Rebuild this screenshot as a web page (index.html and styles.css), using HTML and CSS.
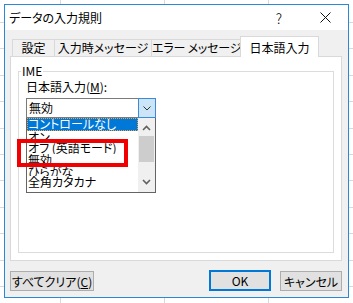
FILE: index.html
```html
<!DOCTYPE html>
<html lang="ja">
<head>
<meta charset="utf-8">
<link rel="stylesheet" href="styles.css">
</head>
<body>
<div class="dialog">
  <div class="titlebar">
    <span class="title">データの入力規則</span>
    <span class="cap help">?</span>
    <span class="cap close"><svg width="11" height="11" viewBox="0 0 11 11"><path d="M0.5 0.5 L10.5 10.5 M10.5 0.5 L0.5 10.5" stroke="#111" stroke-width="1" fill="none"/></svg></span>
  </div>
  <div class="client">
    <div class="tabs">
      <div class="tab t1">設定</div>
      <div class="tab t2">入力時メッセージ</div>
      <div class="tab t3">エラー メッセージ</div>
      <div class="tab t4 active">日本語入力</div>
    </div>
    <div class="panel">
      <div class="group">
        <span class="group-label">IME</span>
        <div class="field-label">日本語入力(<u>M</u>):</div>
        <div class="combo">
          <span class="combo-value">無効</span>
          <span class="combo-btn"><svg width="8" height="5" viewBox="0 0 8 5"><polyline points="0.5,0.5 4,4 7.5,0.5" stroke="#333" stroke-width="1" fill="none"/></svg></span>
          <div class="list">
            <div class="items">
              <div class="item sel">コントロールなし</div>
              <div class="item short">オン</div>
              <div class="item gap">オフ (英語モード)</div>
              <div class="item">無効</div>
              <div class="item tight">ひらがな</div>
              <div class="item">全角カタカナ</div>
            </div>
            <div class="scrollbar">
              <div class="sb-arrow up"><svg width="9" height="6" viewBox="0 0 9 6"><polyline points="1,5 4.5,1.5 8,5" stroke="#606060" stroke-width="1.6" fill="none"/></svg></div>
              <div class="sb-thumb"></div>
              <div class="sb-space"></div>
              <div class="sb-arrow down"><svg width="9" height="6" viewBox="0 0 9 6"><polyline points="1,1 4.5,4.5 8,1" stroke="#606060" stroke-width="1.6" fill="none"/></svg></div>
            </div>
          </div>
        </div>
        <div class="highlight"></div>
      </div>
    </div>
    <div class="buttons">
      <button class="btn clear">すべてクリア(<u>C</u>)</button>
      <span class="spacer"></span>
      <button class="btn ok">OK</button>
      <button class="btn cancel">キャンセル</button>
    </div>
  </div>
</div>
</body>
</html>
```
FILE: styles.css
```css
html, body {
  margin: 0;
  padding: 0;
}
body {
  width: 353px;
  height: 303px;
  overflow: hidden;
  box-sizing: border-box;
  padding: 4px 0 0 4px;
  font-family: "Noto Sans CJK JP", "Noto Sans", sans-serif;
  font-feature-settings: "palt";
  font-size: 12px;
  color: #000;
  background-color: #fff;
  background-image:
    linear-gradient(to right, transparent 60px, #d9d9d9 60px, #d9d9d9 61px, transparent 61px, transparent 164px, #d9d9d9 164px, #d9d9d9 165px, transparent 165px, transparent 268px, #d9d9d9 268px, #d9d9d9 269px, transparent 269px),
    repeating-linear-gradient(to bottom, transparent 0, transparent 22px, #d9d9d9 22px, #d9d9d9 23px, transparent 23px, transparent 26.4px);
}
.dialog {
  width: 345px;
  height: 294px;
  box-sizing: border-box;
  border: 1px solid #2a88d6;
  display: flex;
  flex-direction: column;
  background: #f0f0f0;
}
.titlebar {
  height: 25px;
  flex: none;
  background: #fff;
  display: flex;
  align-items: center;
}
.title {
  flex: 1;
  padding-left: 4px;
  line-height: 25px;
  white-space: nowrap;
}
.cap {
  width: 46px;
  height: 25px;
  display: flex;
  align-items: center;
  justify-content: center;
}
.help {
  font-size: 14px;
  font-weight: 300;
  padding-top: 1px;
  box-sizing: border-box;
}
.client {
  flex: 1;
  padding: 6px 6px 6px 5px;
  display: flex;
  flex-direction: column;
}
.tabs {
  height: 21px;
  display: flex;
  align-items: flex-end;
  margin-left: 2px;
}
.tab {
  box-sizing: border-box;
  height: 18px;
  border: 1px solid #d9d9d9;
  border-bottom: none;
  background: #f0f0f0;
  margin-left: -1px;
  text-align: center;
  line-height: 16px;
  white-space: nowrap;
}
.t1 { width: 43px; margin-left: 0; }
.t2 { width: 98px; }
.t3 { width: 90px; letter-spacing: -0.2px; }
.t4 { width: 79px; }
.tab.active {
  height: 21px;
  background: #fff;
  padding-top: 3px;
  position: relative;
  z-index: 1;
}
.panel {
  margin-top: -1px;
  width: 332px;
  height: 205px;
  box-sizing: border-box;
  border: 1px solid #d9d9d9;
  background: #fff;
  padding: 14px 7px 0 7px;
}
.group {
  position: relative;
  width: 316px;
  height: 182px;
  box-sizing: border-box;
  border: 1px solid #dcdcdc;
  padding: 0 0 0 7px;
}
.group-label {
  position: absolute;
  left: 2px;
  top: -8px;
  padding: 0 1px;
  line-height: 14px;
  background: #fff;
}
.field-label {
  margin-top: 8px;
  line-height: 14px;
  white-space: nowrap;
}
.field-label u, .btn u {
  text-underline-offset: 1px;
}
.combo {
  position: relative;
  margin-top: 4px;
  width: 130px;
  height: 20px;
  box-sizing: border-box;
  border: 1px solid #7a7a7a;
  display: flex;
  background: #fff;
}
.combo-value {
  flex: 1;
  padding-left: 2px;
  line-height: 18px;
}
.combo-btn {
  width: 18px;
  box-sizing: border-box;
  margin: -1px -1px -1px 0;
  border: 1px solid #3c8bd9;
  background: #cce4f7;
  display: flex;
  align-items: center;
  justify-content: center;
}
.list {
  position: absolute;
  left: -1px;
  top: 19px;
  width: 130px;
  height: 75px;
  box-sizing: border-box;
  border: 1px solid #646464;
  border-top: none;
  background: #fff;
  display: flex;
}
.items {
  flex: 1;
  min-width: 0;
}
.item {
  height: 12px;
  line-height: 12px;
  overflow: hidden;
  padding-left: 1px;
  white-space: nowrap;
}
.item.sel {
  height: 13px;
  background: #0078d7;
  color: #fff;
  outline: 1px dotted #f5a33a;
  outline-offset: -1px;
}
.item.short { height: 8px; }
.item.gap { margin-top: 3px; }
.item.tight { height: 10px; }
.scrollbar {
  width: 17px;
  background: #f0f0f0;
  display: flex;
  flex-direction: column;
}
.sb-arrow {
  display: flex;
  justify-content: center;
  align-items: center;
}
.sb-arrow.up {
  height: 18px;
  padding-top: 2px;
  box-sizing: border-box;
}
.sb-arrow.down {
  height: 20px;
}
.sb-thumb {
  height: 26px;
  margin: 0 1px;
  background: #cdcdcd;
}
.sb-space {
  flex: 1;
}
.highlight {
  position: absolute;
  left: -2px;
  top: 67px;
  width: 111px;
  height: 28px;
  box-sizing: border-box;
  border: 4px solid #f00000;
}
.buttons {
  margin-top: 10px;
  height: 20px;
  display: flex;
}
.btn {
  box-sizing: border-box;
  height: 20px;
  margin: 0;
  padding: 0;
  border: 1px solid #adadad;
  background: #e1e1e1;
  font-family: inherit;
  font-feature-settings: "palt";
  font-size: 12px;
  line-height: 17px;
  color: #000;
  white-space: nowrap;
}
.clear { width: 84px; }
.spacer { flex: 1; }
.ok {
  width: 62px;
  border: 2px solid #0078d7;
  margin-top: -1px;
  height: 21px;
}
.cancel {
  width: 62px;
  margin-left: 9px;
}
```
